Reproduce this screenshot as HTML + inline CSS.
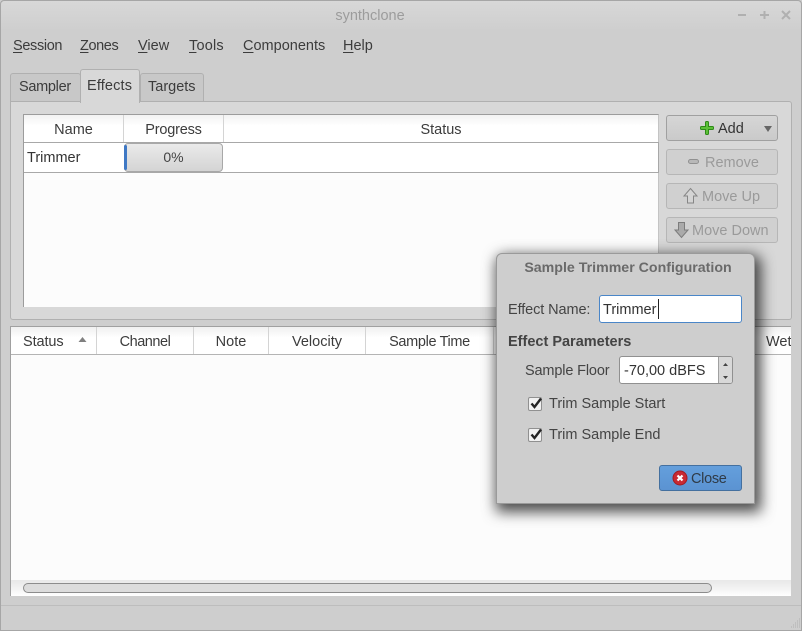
<!DOCTYPE html>
<html><head><meta charset="utf-8"><style>
html,body{margin:0;padding:0;width:802px;height:631px;overflow:hidden;background:#cecece}
*{box-sizing:border-box}
div,span.a,svg.a{position:absolute}
body{font-family:"Liberation Sans","Noto Sans CJK SC",sans-serif;font-size:14.5px;color:#3c3c3c}
.t{white-space:nowrap;line-height:18px;height:18px}
.c{text-align:center}
u{text-decoration:underline;text-underline-offset:2px}
.btn{left:666px;width:112px;height:26px;border:1px solid #a8a8a8;border-radius:3px;background:linear-gradient(#d6d6d6,#cacaca)}
.dis{color:#9a9a9a}
</style></head><body>
<div id="win" style="left:0;top:0;width:802px;height:631px;background:#cecece;border:1px solid #a6a6a6;border-radius:4px 4px 0 0"></div>
<div style="left:1px;top:1px;width:800px;height:30px;background:linear-gradient(#d8d8d8,#cecece);border-radius:4px 4px 0 0"></div>
<div class="t c" style="left:0;width:740px;top:7px;color:#9c9c9c">synthclone</div>
<svg class="a" style="left:735px;top:8px" width="60" height="14" viewBox="0 0 60 14" fill="none" stroke="#b0b0b0" stroke-width="2"><path d="M3 7h8M25 7h9M29.500 3v8M47 3l8 8M55 3l-8 8"/></svg>

<div class="t" style="left:13px;top:37px;letter-spacing:-.35px"><u>S</u>ession</div>
<div class="t" style="left:80px;top:37px;letter-spacing:-.4px"><u>Z</u>ones</div>
<div class="t" style="left:138px;top:37px"><u>V</u>iew</div>
<div class="t" style="left:189px;top:37px;letter-spacing:.2px"><u>T</u>ools</div>
<div class="t" style="left:243px;top:37px"><u>C</u>omponents</div>
<div class="t" style="left:343px;top:37px"><u>H</u>elp</div>

<!-- notebook -->
<div style="left:10px;top:101px;width:655px;height:219px;background:#d8d8d8;border:1px solid #b0b0b0;border-radius:0 0 3px 3px"></div>
<div style="left:664px;top:101px;width:128px;height:219px;background:#d8d8d8;border:1px solid #b0b0b0;border-left:0;border-radius:0 3px 3px 0"></div>
<div style="left:10px;top:73px;width:71px;height:29px;background:#c8c8c8;border:1px solid #b0b0b0;border-radius:3px 3px 0 0"></div>
<div style="left:140px;top:73px;width:64px;height:29px;background:#c8c8c8;border:1px solid #b0b0b0;border-radius:3px 3px 0 0"></div>
<div style="left:80px;top:69px;width:60px;height:34px;background:#d8d8d8;border:1px solid #b0b0b0;border-bottom:0;border-radius:3px 3px 0 0"></div>
<div class="t" style="left:19px;top:78px;letter-spacing:-.3px">Sampler</div>
<div class="t" style="left:87px;top:77px;letter-spacing:.15px">Effects</div>
<div class="t" style="left:148px;top:78px">Targets</div>

<!-- effects list -->
<div style="left:23px;top:114px;width:636px;height:193px;background:#fcfcfc;border:1px solid #9c9c9c;border-bottom:0;border-right:1px solid #c4c4c4"></div>
<div style="left:24px;top:115px;width:634px;height:27px;background:linear-gradient(#f2f2f2,#ffffff 40%)"></div>
<div style="left:24px;top:142px;width:634px;height:1px;background:#a8a8a8"></div>
<div style="left:24px;top:143px;width:634px;height:29px;background:#fff"></div>
<div style="left:24px;top:172px;width:635px;height:1px;background:#a8a8a8"></div>
<div style="left:658px;top:142px;width:1px;height:31px;background:#a8a8a8"></div>
<div style="left:123px;top:115px;width:1px;height:27px;background:#d4d4d4"></div>
<div style="left:223px;top:115px;width:1px;height:27px;background:#d4d4d4"></div>
<div class="t c" style="left:24px;width:99px;top:121px">Name</div>
<div class="t c" style="left:124px;width:99px;top:121px;letter-spacing:-.2px">Progress</div>
<div class="t c" style="left:224px;width:434px;top:121px">Status</div>
<div class="t" style="left:27px;top:149px;color:#333">Trimmer</div>
<div style="left:124px;top:143px;width:99px;height:29px;background:linear-gradient(#eaeaea,#d4d4d4);border:1px solid #a8a8a8;border-radius:4px"></div>
<div style="left:124px;top:145px;width:3px;height:25px;background:#3f78c4;border-radius:2px"></div>
<div class="t c" style="left:124px;width:99px;top:148px;font-size:14px;color:#444">0%</div>

<!-- side buttons -->
<div class="btn" style="top:115px;border-color:#a0a0a0"></div>
<svg class="a" style="left:699px;top:120px" width="16" height="16" viewBox="0 0 16 16"><path d="M6.500 2.500q0-1 1-1h1q1 0 1 1V6.500h4q1 0 1 1v1q0 1-1 1h-4v4q0 1-1 1h-1q-1 0-1-1v-4h-4q-1 0-1-1v-1q0-1 1-1h4z" fill="#5cc038" stroke="#2e8a18" stroke-width="1"/></svg>
<div class="t" style="left:718px;top:120px;color:#333">Add</div>
<svg class="a" style="left:763px;top:125px" width="10" height="8"><path d="M1 1h8L5 7z" fill="#666"/></svg>
<div class="btn" style="top:149px;border-color:#b6b6b6;background:#d0d0d0"></div>
<svg class="a" style="left:687px;top:157px" width="14" height="10"><rect x="1.500" y="2.500" width="10" height="4" rx="2" fill="#b8b8b8" stroke="#909090"/></svg>
<div class="t dis" style="left:705px;top:154px">Remove</div>
<div class="btn" style="top:183px;border-color:#b6b6b6;background:#d0d0d0"></div>
<svg class="a" style="left:683px;top:187px" width="15" height="18"><path d="M7.500 1.500L14 9h-3.500v7h-6V9H1z" fill="#d4d4d4" stroke="#868686"/></svg>
<div class="t dis" style="left:702px;top:188px">Move Up</div>
<div class="btn" style="top:217px;border-color:#b6b6b6;background:#d0d0d0"></div>
<svg class="a" style="left:674px;top:221px" width="15" height="18"><path d="M4.500 1.500h6V9H14l-6.500 7.500L1 9h3.500z" fill="#aaa" stroke="#7c7c7c"/></svg>
<div class="t dis" style="left:692px;top:222px">Move Down</div>

<!-- lower table -->
<div style="left:10px;top:326px;width:781px;height:270px;background:#fcfcfc;border-top:1px solid #a0a0a0;border-left:1px solid #a0a0a0"></div>
<div style="left:11px;top:327px;width:780px;height:27px;background:linear-gradient(#f0f0f0,#fff 40%)"></div>
<div style="left:11px;top:354px;width:780px;height:1px;background:#b4b4b4"></div>
<div style="left:96px;top:327px;width:1px;height:27px;background:#d4d4d4"></div>
<div style="left:193px;top:327px;width:1px;height:27px;background:#d4d4d4"></div>
<div style="left:268px;top:327px;width:1px;height:27px;background:#d4d4d4"></div>
<div style="left:365px;top:327px;width:1px;height:27px;background:#d4d4d4"></div>
<div style="left:493px;top:327px;width:1px;height:27px;background:#d4d4d4"></div>
<div class="t" style="left:23px;top:333px;letter-spacing:-.1px">Status</div>
<svg class="a" style="left:78px;top:336px" width="10" height="7"><path d="M0.500 6L4.500 1 8.500 6z" fill="#808080"/></svg>
<div class="t c" style="left:97px;width:96px;top:333px;letter-spacing:-.45px">Channel</div>
<div class="t c" style="left:194px;width:74px;top:333px">Note</div>
<div class="t c" style="left:269px;width:96px;top:333px">Velocity</div>
<div class="t c" style="left:366px;width:127px;top:333px;letter-spacing:-.35px">Sample Time</div>
<div style="left:766px;top:327px;width:25px;height:27px;overflow:hidden"><div class="t" style="left:0;top:6px">Wet</div></div>
<!-- scrollbar -->
<div style="left:11px;top:580px;width:780px;height:16px;background:linear-gradient(#e8e8e8,#f2f2f2 50%,#fff)"></div>
<div style="left:23px;top:583px;width:689px;height:10px;background:#dcdcdc;border:1px solid #8c8c8c;border-radius:5px"></div>
<div style="left:1px;top:605px;width:800px;height:1px;background:#bdbdbd"></div>
<svg class="a" style="left:790px;top:618px" width="11" height="11"><path d="M9 1h1M7 3h1M9 3h1M5 5h1M7 5h1M9 5h1M3 7h1M5 7h1M7 7h1M9 7h1M1 9h1M3 9h1M5 9h1M7 9h1M9 9h1" stroke="#b0b0b0" stroke-width="1"/></svg>

<!-- dialog -->
<div style="left:496px;top:253px;width:259px;height:251px;background:#cecece;border:1px solid #9a9a9a;border-radius:6px 6px 0 0;box-shadow:3px 5px 14px 3px rgba(0,0,0,.7)"></div>
<div class="t c" style="left:497px;width:262px;top:259px;font-weight:700;font-size:14.200px;color:#6a6a6a">Sample Trimmer Configuration</div>
<div class="t" style="left:508px;top:301px;color:#444;letter-spacing:-.1px">Effect Name:</div>
<div style="left:599px;top:295px;width:143px;height:28px;background:#fff;border:1px solid #4a86c8;border-radius:3px"></div>
<div class="t" style="left:603px;top:301px;color:#333">Trimmer</div>
<div style="left:658px;top:299px;width:1px;height:20px;background:#222"></div>
<div class="t" style="left:508px;top:333px;font-weight:700;color:#444;font-size:14.500px">Effect Parameters</div>
<div class="t" style="left:525px;top:362px;color:#444;letter-spacing:-.15px">Sample Floor</div>
<div style="left:619px;top:356px;width:114px;height:28px;background:#fff;border:1px solid #909090;border-radius:3px"></div>
<div style="left:718px;top:357px;width:14px;height:26px;background:#d8d8d8;border-left:1px solid #a0a0a0;border-radius:0 2px 2px 0"></div>
<svg class="a" style="left:722px;top:361px" width="7" height="20"><path d="M1 5L3.500 2 6 5zM1 15h5L3.500 18z" fill="#444"/></svg>
<div class="t" style="left:624px;top:362px;color:#333">-70,00 dBFS</div>
<div style="left:528px;top:397px;width:14px;height:14px;background:#f0f0f0;border:1px solid #909090;border-radius:2px"></div>
<svg class="a" style="left:529px;top:396px" width="15" height="14"><path d="M2.500 7.500L5.500 11 12 2.500" fill="none" stroke="#222" stroke-width="2.400"/></svg>
<div class="t" style="left:549px;top:395px;color:#444">Trim Sample Start</div>
<div style="left:528px;top:428px;width:14px;height:14px;background:#f0f0f0;border:1px solid #909090;border-radius:2px"></div>
<svg class="a" style="left:529px;top:427px" width="15" height="14"><path d="M2.500 7.500L5.500 11 12 2.500" fill="none" stroke="#222" stroke-width="2.400"/></svg>
<div class="t" style="left:549px;top:426px;color:#444">Trim Sample End</div>
<div style="left:659px;top:465px;width:83px;height:26px;background:linear-gradient(#649fdc,#5b93d2);border:1px solid #44709f;border-radius:3px"></div>
<svg class="a" style="left:672px;top:470px" width="16" height="16"><circle cx="8" cy="8" r="7" fill="#c92a34" stroke="#a01c24"/><path d="M5.500 5.500l5 5M10.500 5.500l-5 5" stroke="#fff" stroke-width="2.200"/></svg>
<div class="t" style="left:691px;top:470px;color:#2f3b48;letter-spacing:-.3px">Close</div>
</body></html>
